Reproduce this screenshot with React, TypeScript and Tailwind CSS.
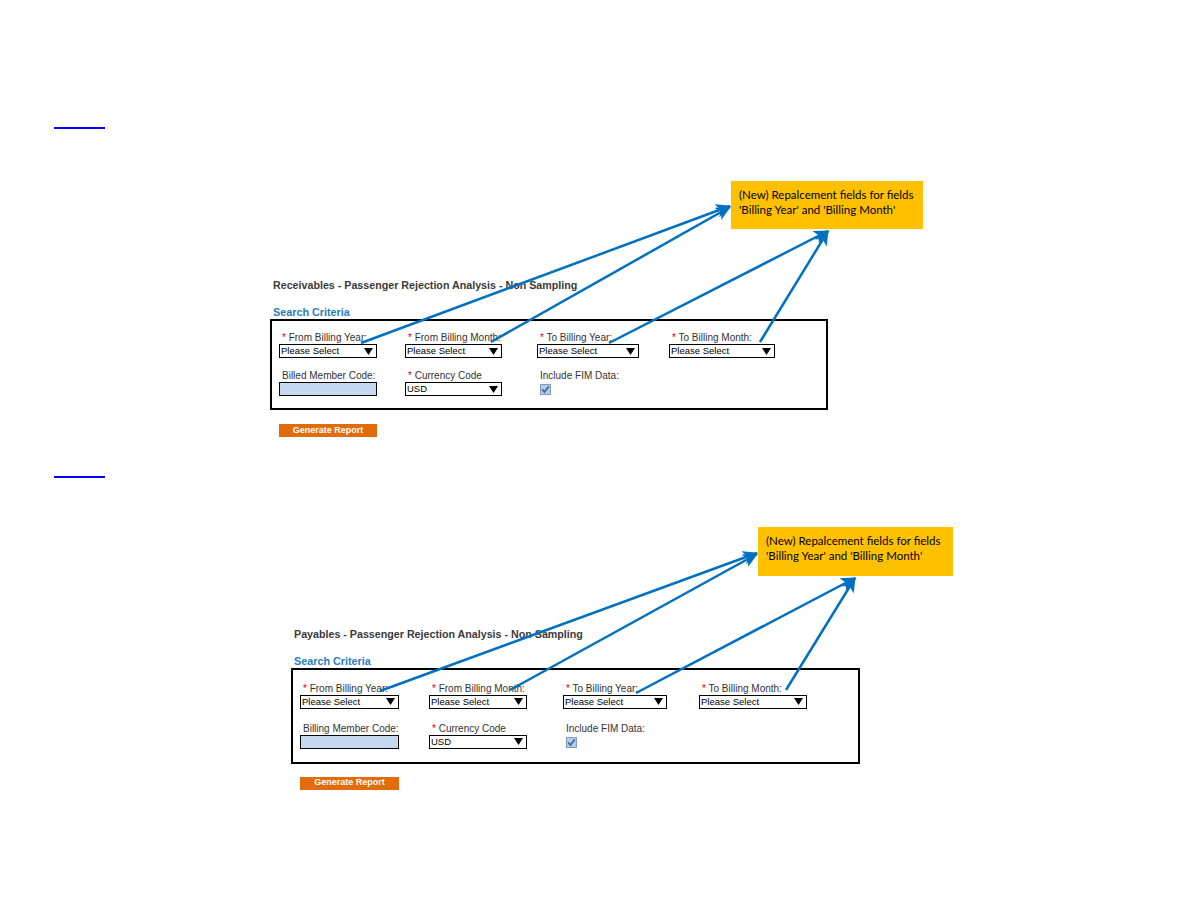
const arial = { fontFamily: '"Liberation Sans", Arial, sans-serif' };

type Col = { label: string; w: number };

function Select({ w, value }: { w: number; value: string }) {
  return (
    <div
      className="flex h-[14px] items-center justify-between border border-black bg-white pl-[1px] pr-[3px] text-[9.5px] leading-none text-black"
      style={{ width: w }}
    >
      <span>{value}</span>
      <svg width="9" height="7" viewBox="0 0 9 7">
        <path d="M0 0H9L4.5 7Z" fill="#000" />
      </svg>
    </div>
  );
}

function Label({ text, req }: { text: string; req?: boolean }) {
  return (
    <div className="h-[11px] whitespace-nowrap pl-[3px] text-[10px] leading-[11px] text-[#333]">
      {req && <span className="text-[#e00000]">* </span>}
      {text}
    </div>
  );
}

function Checkbox() {
  return (
    <svg width="11" height="11" viewBox="0 0 11 11" className="ml-[3px]">
      <rect x="0.5" y="0.5" width="10" height="10" fill="#b7cce6" stroke="#7f9db9" />
      <path d="M2.2 5.4L4.4 8L8.8 2.4" stroke="#3c6ea8" strokeWidth="1.8" fill="none" />
    </svg>
  );
}

function Report({
  title,
  memberLabel,
  boxW,
  boxH,
  cols,
  widths,
  padTop,
  rowGap,
  btnGap,
}: {
  title: string;
  memberLabel: string;
  boxW: number;
  boxH: number;
  cols: Col[];
  widths: string;
  padTop: number;
  rowGap: number;
  btnGap: number;
}) {
  return (
    <div style={arial}>
      <div className="h-[12px] whitespace-nowrap text-[10.7px] font-bold leading-[12px] text-[#3a3a3a]">{title}</div>
      <div className="mt-[15px] h-[12px] text-[10.8px] font-bold leading-[12px] text-[#2a7cc0]">Search Criteria</div>
      <div
        className="ml-[-3px] mt-[1px] border-2 border-black pl-[7px]"
        style={{ width: boxW, height: boxH, paddingTop: padTop }}
      >
        <div className={`grid ${widths}`}>
          {cols.map((c) => (
            <div key={c.label}>
              <Label text={c.label} req />
              <div className="mt-[1px]">
                <Select w={c.w} value="Please Select" />
              </div>
            </div>
          ))}
        </div>
        <div className={`grid ${widths}`} style={{ marginTop: rowGap }}>
          <div>
            <Label text={memberLabel} />
            <div className="mt-[1px] h-[14px] border border-black bg-[#c5d9f1]" style={{ width: cols[0].w }} />
          </div>
          <div>
            <Label text="Currency Code" req />
            <div className="mt-[1px]">
              <Select w={cols[1].w} value="USD" />
            </div>
          </div>
          <div>
            <Label text="Include FIM Data:" />
            <div className="mt-[3px]">
              <Checkbox />
            </div>
          </div>
        </div>
      </div>
      <div
        className="ml-[6px] flex h-[13px] items-center justify-center bg-[#e36c0a] text-[9px] font-bold text-white"
        style={{ width: cols[0].w, marginTop: btnGap }}
      >
        Generate Report
      </div>
    </div>
  );
}

function Callout() {
  return (
    <div
      className="h-full bg-[#ffc000] px-[8px] pt-[6px] text-[11.5px] leading-[15px] text-black"
      style={{ fontFamily: 'Lato, "Open Sans", sans-serif' }}
    >
      (New) Repalcement fields for fields
      <br />
      'Billing Year' and 'Billing Month'
    </div>
  );
}

const arrows: [number, number, number, number][] = [
  [361, 343, 730, 206],
  [491, 342, 730, 207],
  [609, 343, 828, 231],
  [760, 342, 828, 231],
  [380, 691, 757, 553],
  [510, 690, 757, 554],
  [636, 693, 855, 578],
  [786, 690, 855, 578],
];

export default function App() {
  return (
    <div className="relative h-[918px] w-[1188px] overflow-hidden bg-white">
      <div className="ml-[54px] mt-[127px] h-[2px] w-[51px] bg-[#0000ff]" />

      <div className="ml-[731px] mt-[52px] h-[48px] w-[192px]">
        <Callout />
      </div>
      <div className="ml-[273px] mt-[50px]">
        <Report
          title="Receivables - Passenger Rejection Analysis - Non Sampling"
          memberLabel="Billed Member Code:"
          boxW={558}
          boxH={91}
          widths="grid-cols-[126px_132px_132px_auto]"
          padTop={11}
          rowGap={12}
          btnGap={14}
          cols={[
            { label: 'From Billing Year:', w: 98 },
            { label: 'From Billing Month:', w: 97 },
            { label: 'To Billing Year:', w: 102 },
            { label: 'To Billing Month:', w: 106 },
          ]}
        />
      </div>

      <div className="ml-[54px] mt-[39px] h-[1.5px] w-[51px] bg-[#0000ff]" />

      <div className="ml-[758px] mt-[49px] h-[49px] w-[195px]">
        <Callout />
      </div>
      <div className="ml-[294px] mt-[52px]">
        <Report
          title="Payables - Passenger Rejection Analysis - Non Sampling"
          memberLabel="Billing Member Code:"
          boxW={569}
          boxH={96}
          widths="grid-cols-[129px_134px_136px_auto]"
          padTop={13}
          rowGap={14}
          btnGap={13}
          cols={[
            { label: 'From Billing Year:', w: 99 },
            { label: 'From Billing Month:', w: 98 },
            { label: 'To Billing Year:', w: 104 },
            { label: 'To Billing Month:', w: 108 },
          ]}
        />
      </div>

      <svg className="pointer-events-none absolute inset-0" width="1188" height="918">
        <defs>
          <marker id="head" markerUnits="userSpaceOnUse" markerWidth="16" markerHeight="14" refX="14" refY="7" orient="auto">
            <path d="M0 0L15 7L0 14L4 7Z" fill="#0070c0" />
          </marker>
        </defs>
        {arrows.map(([x1, y1, x2, y2], i) => (
          <line key={i} x1={x1} y1={y1} x2={x2} y2={y2} stroke="#0070c0" strokeWidth="2.5" markerEnd="url(#head)" />
        ))}
      </svg>
    </div>
  );
}
